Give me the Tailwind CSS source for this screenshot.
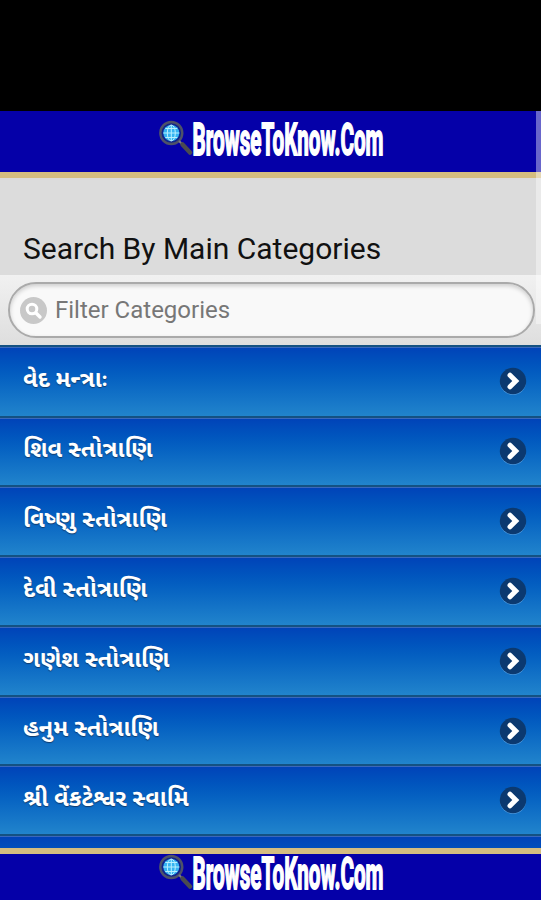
<!DOCTYPE html>
<html lang="gu">
<head>
    <meta charset="UTF-8">
    <meta name="viewport" content="width=device-width, initial-scale=1.0">
    <title>BrowseToKnow.Com</title>
    <script src="https://cdn.jsdelivr.net/npm/@tailwindcss/browser@4"></script>
</head>
<body class="bg-black font-['Roboto','Noto_Sans_Gujarati','Noto_Sans',sans-serif]">

    <!-- Shared icons -->
    <svg class="hidden">
        <symbol id="logo" viewBox="0 0 230 38">
            <circle cx="14.3" cy="13" r="11" fill="#10248c" stroke="#4e5268" stroke-width="2.4"/>
            <circle cx="14.3" cy="13" r="8" fill="#35b4f2"/>
            <path d="M6.3 13h16M14.3 5v16M8.3 8.5h12M8.3 17.5h12" stroke="#b8f0ff" stroke-width="1" fill="none"/>
            <ellipse cx="14.3" cy="13" rx="4" ry="8" stroke="#b8f0ff" stroke-width="1" fill="none"/>
            <path d="M22 21l3 3" stroke="#7b7b88" stroke-width="2"/>
            <path d="M25.5 24.5l7.5 8" stroke="#4b4b50" stroke-width="4.5" stroke-linecap="round"/>
            <g transform="translate(35.5 35) scale(1 2)">
                <text x="0" y="0" font-family="Roboto, Liberation Sans, sans-serif" font-size="22.5" font-weight="bold" fill="#fff" stroke="#fff" stroke-width=".9" textLength="191" lengthAdjust="spacingAndGlyphs">BrowseToKnow.Com</text>
            </g>
        </symbol>
        <symbol id="arrow" viewBox="0 0 28 28">
            <circle cx="14" cy="15" r="13" fill="#4b98dc"/>
            <circle cx="14" cy="14" r="13.2" fill="#0b3970"/>
            <path d="M11 8.2l5.8 5.8-5.8 5.8" fill="none" stroke="#fff" stroke-width="5" stroke-linecap="round"/>
        </symbol>
    </svg>

    <div class="relative flex h-[900px] w-[541px] flex-col overflow-hidden">
        <div class="h-[111px] shrink-0 bg-black"></div>

        <!-- Header -->
        <header class="flex h-[67px] shrink-0 justify-center border-b-[6px] border-[#d5bd80] bg-[#0500a8] pt-[9px] pl-[3px]">
            <svg class="h-[38px] w-[230px]"><use href="#logo"/></svg>
        </header>

        <div class="flex h-[97px] shrink-0 items-end bg-[#dcdcdc] px-[23px] pb-[8px]">
            <h1 class="text-[30px] leading-9 whitespace-nowrap text-[#111]">Search By Main Categories</h1>
        </div>

        <!-- Filter -->
        <div class="h-[70px] shrink-0 bg-linear-to-b from-[#f1f1f1] to-[#dedede] pt-[7px] pr-[6px] pl-[8px]">
            <div class="flex h-[56px] items-center gap-2 rounded-full border-2 border-[#aaa] bg-[#f9f9f9] pl-[10px] shadow-[inset_0_2px_4px_rgba(0,0,0,0.18)]">
                <svg class="size-[27px]" viewBox="0 0 27 27">
                    <circle cx="13.5" cy="13.5" r="13.5" fill="#c8c8c8"/>
                    <circle cx="12" cy="12" r="4.8" fill="none" stroke="#fff" stroke-width="3"/>
                    <path d="M16 16l4 4" stroke="#fff" stroke-width="3.4" stroke-linecap="round"/>
                </svg>
                <span class="text-[24px] text-[#777]">Filter Categories</span>
            </div>
        </div>

        <!-- Category list -->
        <ul class="min-h-0 flex-1 overflow-hidden text-[23.7px] font-bold text-white [text-shadow:0_1px_1px_#123a6b]">
            <li class="flex h-[70.5px] items-center justify-between border-t-2 border-[#145182] bg-linear-to-b from-[#0042b8] to-[#2184cc] pr-[14px] pl-[23px] shadow-[inset_0_1px_0_#3a68bc]"><span class="pb-[3px]">વેદ મન્ત્રાઃ</span><svg class="size-7"><use href="#arrow"/></svg></li>
            <li class="flex h-[69.8px] items-center justify-between border-t-2 border-[#145182] bg-linear-to-b from-[#0042b8] to-[#2184cc] pr-[14px] pl-[23px] shadow-[inset_0_1px_0_#3a68bc]"><span class="pb-[3px]">શિવ સ્તોત્રાણિ</span><svg class="size-7"><use href="#arrow"/></svg></li>
            <li class="flex h-[69.8px] items-center justify-between border-t-2 border-[#145182] bg-linear-to-b from-[#0042b8] to-[#2184cc] pr-[14px] pl-[23px] shadow-[inset_0_1px_0_#3a68bc]"><span class="pb-[3px]">વિષ્ણુ સ્તોત્રાણિ</span><svg class="size-7"><use href="#arrow"/></svg></li>
            <li class="flex h-[69.8px] items-center justify-between border-t-2 border-[#145182] bg-linear-to-b from-[#0042b8] to-[#2184cc] pr-[14px] pl-[23px] shadow-[inset_0_1px_0_#3a68bc]"><span class="pb-[3px]">દેવી સ્તોત્રાણિ</span><svg class="size-7"><use href="#arrow"/></svg></li>
            <li class="flex h-[69.8px] items-center justify-between border-t-2 border-[#145182] bg-linear-to-b from-[#0042b8] to-[#2184cc] pr-[14px] pl-[23px] shadow-[inset_0_1px_0_#3a68bc]"><span class="pb-[3px]">ગણેશ સ્તોત્રાણિ</span><svg class="size-7"><use href="#arrow"/></svg></li>
            <li class="flex h-[69.8px] items-center justify-between border-t-2 border-[#145182] bg-linear-to-b from-[#0042b8] to-[#2184cc] pr-[14px] pl-[23px] shadow-[inset_0_1px_0_#3a68bc]"><span class="pb-[3px]">હનુમ સ્તોત્રાણિ</span><svg class="size-7"><use href="#arrow"/></svg></li>
            <li class="flex h-[69.8px] items-center justify-between border-t-2 border-[#145182] bg-linear-to-b from-[#0042b8] to-[#2184cc] pr-[14px] pl-[23px] shadow-[inset_0_1px_0_#3a68bc]"><span class="pb-[3px]">શ્રી વેંકટેશ્વર સ્વામિ</span><svg class="size-7"><use href="#arrow"/></svg></li>
            <li class="h-[69.8px] border-t-2 border-[#145182] bg-linear-to-b from-[#0042b8] to-[#2184cc] shadow-[inset_0_1px_0_#3a68bc]"></li>
        </ul>

        <!-- Footer -->
        <footer class="flex h-[52px] shrink-0 justify-center border-t-[6px] border-[#d5bd80] bg-[#0500a8] pl-[3px]">
            <svg class="h-[38px] w-[230px]"><use href="#logo"/></svg>
        </footer>

        <!-- Scrollbar thumb -->
        <div class="absolute top-[111px] right-0 h-[213px] w-[5px] bg-white/40"></div>
    </div>

</body>
</html>
